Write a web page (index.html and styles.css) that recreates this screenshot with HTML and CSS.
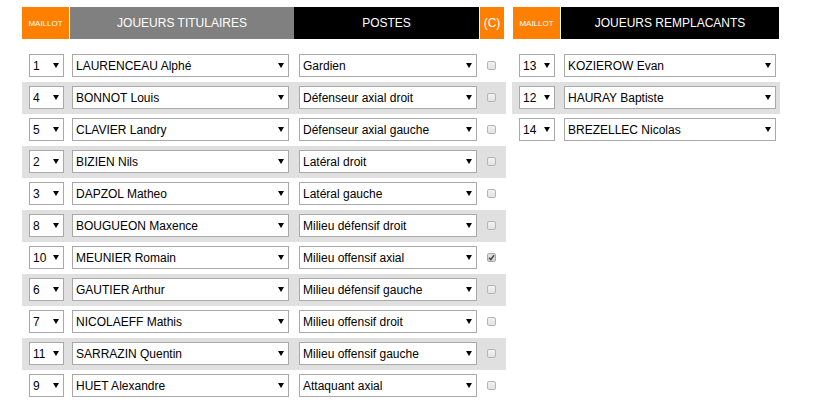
FILE: index.html
```html
<!DOCTYPE html>
<html lang="fr">
<head>
    <meta charset="UTF-8">
    <title>Composition de l'équipe</title>
    <link rel="stylesheet" href="styles.css">
</head>
<body>

    <div class="compo">

        <!-- Titulaires -->
        <div class="tableau titulaires">
            <div class="entete">
                <div class="th maillot">MAILLOT</div>
                <div class="th joueurs">JOUEURS TITULAIRES</div>
                <div class="th postes">POSTES</div>
                <div class="th capitaine">(C)</div>
            </div>

            <div class="ligne">
                <span class="sel num"><select><option>1</option></select></span>
                <span class="sel nom"><select><option>LAURENCEAU Alphé</option></select></span>
                <span class="sel poste"><select><option>Gardien</option></select></span>
                <span class="check"></span>
            </div>
            <div class="ligne">
                <span class="sel num"><select><option>4</option></select></span>
                <span class="sel nom"><select><option>BONNOT Louis</option></select></span>
                <span class="sel poste"><select><option>Défenseur axial droit</option></select></span>
                <span class="check"></span>
            </div>
            <div class="ligne">
                <span class="sel num"><select><option>5</option></select></span>
                <span class="sel nom"><select><option>CLAVIER Landry</option></select></span>
                <span class="sel poste"><select><option>Défenseur axial gauche</option></select></span>
                <span class="check"></span>
            </div>
            <div class="ligne">
                <span class="sel num"><select><option>2</option></select></span>
                <span class="sel nom"><select><option>BIZIEN Nils</option></select></span>
                <span class="sel poste"><select><option>Latéral droit</option></select></span>
                <span class="check"></span>
            </div>
            <div class="ligne">
                <span class="sel num"><select><option>3</option></select></span>
                <span class="sel nom"><select><option>DAPZOL Matheo</option></select></span>
                <span class="sel poste"><select><option>Latéral gauche</option></select></span>
                <span class="check"></span>
            </div>
            <div class="ligne">
                <span class="sel num"><select><option>8</option></select></span>
                <span class="sel nom"><select><option>BOUGUEON Maxence</option></select></span>
                <span class="sel poste"><select><option>Milieu défensif droit</option></select></span>
                <span class="check"></span>
            </div>
            <div class="ligne">
                <span class="sel num"><select><option>10</option></select></span>
                <span class="sel nom"><select><option>MEUNIER Romain</option></select></span>
                <span class="sel poste"><select><option>Milieu offensif axial</option></select></span>
                <span class="check coche">
                    <svg width="7" height="7" viewBox="0 0 7 7"><path d="M1 3.8 L2.8 5.6 L6 1.2" fill="none" stroke="#4a4a4a" stroke-width="1.6"/></svg>
                </span>
            </div>
            <div class="ligne">
                <span class="sel num"><select><option>6</option></select></span>
                <span class="sel nom"><select><option>GAUTIER Arthur</option></select></span>
                <span class="sel poste"><select><option>Milieu défensif gauche</option></select></span>
                <span class="check"></span>
            </div>
            <div class="ligne">
                <span class="sel num"><select><option>7</option></select></span>
                <span class="sel nom"><select><option>NICOLAEFF Mathis</option></select></span>
                <span class="sel poste"><select><option>Milieu offensif droit</option></select></span>
                <span class="check"></span>
            </div>
            <div class="ligne">
                <span class="sel num"><select><option>11</option></select></span>
                <span class="sel nom"><select><option>SARRAZIN Quentin</option></select></span>
                <span class="sel poste"><select><option>Milieu offensif gauche</option></select></span>
                <span class="check"></span>
            </div>
            <div class="ligne">
                <span class="sel num"><select><option>9</option></select></span>
                <span class="sel nom"><select><option>HUET Alexandre</option></select></span>
                <span class="sel poste"><select><option>Attaquant axial</option></select></span>
                <span class="check"></span>
            </div>
        </div>

        <!-- Remplaçants -->
        <div class="tableau remplacants">
            <div class="entete">
                <div class="th maillot">MAILLOT</div>
                <div class="th remplacants-titre">JOUEURS REMPLACANTS</div>
            </div>

            <div class="ligne">
                <span class="sel num"><select><option>13</option></select></span>
                <span class="sel nom"><select><option>KOZIEROW Evan</option></select></span>
            </div>
            <div class="ligne">
                <span class="sel num"><select><option>12</option></select></span>
                <span class="sel nom"><select><option>HAURAY Baptiste</option></select></span>
            </div>
            <div class="ligne">
                <span class="sel num"><select><option>14</option></select></span>
                <span class="sel nom"><select><option>BREZELLEC Nicolas</option></select></span>
            </div>
        </div>

    </div>

</body>
</html>
```

FILE: styles.css
```css
body {
    margin: 0;
    padding: 0;
    background: #fff;
    font-family: "Liberation Sans", Arial, sans-serif;
    font-size: 12px;
    color: #000;
}

.compo {
    display: flex;
    align-items: flex-start;
    gap: 6px;
    padding: 7px 0 0 22px;
}

/* En-têtes */
.entete {
    display: flex;
    height: 32px;
    margin-bottom: 11px;
}

.th {
    display: flex;
    align-items: center;
    justify-content: center;
    color: #fff;
    font-size: 12px;
}

.th.maillot {
    width: 47px;
    margin-right: 1px;
    background: #ff8000;
    font-size: 8px;
}

.th.joueurs {
    width: 224px;
    background: #808080;
}

.th.postes {
    width: 185px;
    margin-right: 1px;
    background: #000;
}

.th.capitaine {
    width: 24px;
    background: #ff8000;
}

.th.remplacants-titre {
    width: 218px;
    background: #000;
}

/* Lignes */
.tableau.titulaires {
    width: 484px;
}

.tableau.remplacants {
    width: 268px;
}

.remplacants .entete {
    margin-left: 1px;
}

.ligne {
    display: flex;
    align-items: flex-start;
    height: 32px;
    padding: 4px 0 0 7px;
    box-sizing: border-box;
}

.ligne:nth-child(odd) {
    background: #e0e0e0;
}

/* Listes déroulantes */
.sel {
    position: relative;
    display: block;
    height: 23px;
}

.sel select {
    -webkit-appearance: none;
    appearance: none;
    width: 100%;
    height: 23px;
    margin: 0;
    padding: 0 12px 0 3px;
    border: 1px solid #a9a9a9;
    border-radius: 0;
    background: #fff;
    color: #000;
    font-family: "Liberation Sans", Arial, sans-serif;
    font-size: 12px;
    outline: none;
}

.sel::after {
    content: "";
    position: absolute;
    right: 5px;
    top: 9px;
    border-left: 3.5px solid transparent;
    border-right: 3.5px solid transparent;
    border-top: 5px solid #000;
    pointer-events: none;
}

.titulaires .num { width: 35px; margin-right: 8px; }
.titulaires .nom { width: 217px; margin-right: 10px; }
.titulaires .poste { width: 178px; margin-right: 10px; }

.remplacants .num { width: 36px; margin-right: 9px; }
.remplacants .nom { width: 212px; }

/* Case capitaine */
.check {
    display: flex;
    align-items: center;
    justify-content: center;
    width: 9px;
    height: 9px;
    margin-top: 7px;
    border: 1px solid #b5b5b5;
    border-radius: 2px;
    background: linear-gradient(#f2f2f2, #e2e2e2);
    box-sizing: border-box;
}

.check.coche {
    background: linear-gradient(#e4e4e4, #d2d2d2);
    border-color: #a8a8a8;
}
```
